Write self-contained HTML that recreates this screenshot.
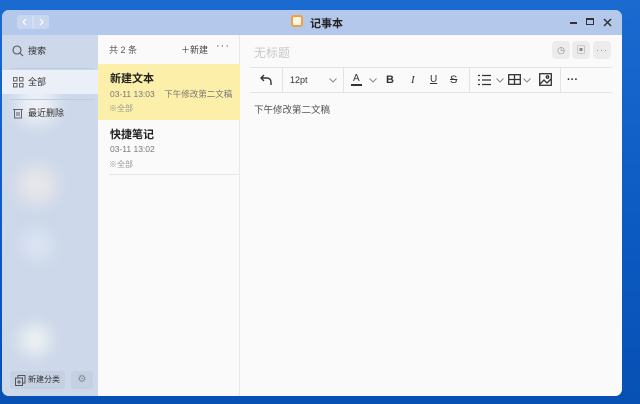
<!DOCTYPE html>
<html><head><meta charset="utf-8"><style>
*{margin:0;padding:0;box-sizing:border-box}
body{width:640px;height:404px;background:linear-gradient(180deg,#1a6ad0 0%,#0c5cc4 50%,#0750b4 100%);font-family:"Liberation Sans","Noto Sans CJK SC",sans-serif;position:relative;overflow:hidden}
.win{position:absolute;left:2px;top:10px;width:620px;height:386px;border-radius:7px;overflow:hidden;background:#fafafa}
.title{position:absolute;left:0;top:0;width:620px;height:25px;background:#b3c8ea}
.nav{position:absolute;left:15px;top:5px;width:32px;height:14px;background:#c8d7ef;border-radius:3px}
.side{position:absolute;left:0;top:25px;width:96px;height:361px;background:#cdd8ea}
.blob{position:absolute;border-radius:50%;filter:blur(8px)}
.si{position:absolute;left:0;width:96px;height:24px;font-size:9px;color:#333;line-height:24px;padding-left:26px}
.si svg{position:absolute;left:10px;top:6px}
.list{position:absolute;left:96px;top:25px;width:142px;height:361px;background:#fafafa;border-right:1px solid #e8e8e8}
.ed{position:absolute;left:238px;top:25px;width:382px;height:361px;background:#fafafa}
.tb{position:absolute;left:10px;top:32px;width:362px;height:26px;border-top:1px solid #e3e3e3;border-bottom:1px solid #e3e3e3}
.tb span{position:absolute;top:0;line-height:24px;font-size:12px;color:#333}
.tb svg{position:absolute}
.div{position:absolute;top:0;width:1px;height:24px;background:#e3e3e3}
.btn{position:absolute;top:6px;width:18px;height:18px;background:#ececec;border-radius:4px;color:#888;font-size:9px;text-align:center;line-height:18px}
</style></head><body>
<div class="win">
 <div class="title">
  <div class="nav"><svg width="32" height="14" style="position:absolute;left:0;top:0"><polyline points="9,4 6,7 9,10" fill="none" stroke="#fff" stroke-width="1.2"/><line x1="16" y1="1" x2="16" y2="13" stroke="#e0e8f6"/><polyline points="23,4 26,7 23,10" fill="none" stroke="#fff" stroke-width="1.2"/></svg></div>
  <div style="position:absolute;left:289px;top:5px;width:12px;height:12px;border:2px solid #f0a040;border-radius:3px;background:#fff6e8"></div>
  <div style="position:absolute;left:308px;top:5px;font-size:11px;font-weight:bold;color:#222">记事本</div>
  <div style="position:absolute;left:568px;top:12px;width:7px;height:2px;background:#333"></div>
  <div style="position:absolute;left:584px;top:8px;width:8px;height:7px;border:1.5px solid #333;border-top-width:2px"></div>
  <svg width="9" height="9" style="position:absolute;left:601px;top:8px"><path d="M1 1L8 8M8 1L1 8" stroke="#333" stroke-width="1.5"/></svg>
 </div>
 <div class="side">
  <div class="blob" style="left:15px;top:50px;width:40px;height:40px;background:#eef1f6"></div>
  <div class="blob" style="left:15px;top:130px;width:40px;height:40px;background:#e6e6ea"></div>
  <div class="blob" style="left:20px;top:195px;width:30px;height:30px;background:#dbe5f3"></div>
  <div class="blob" style="left:18px;top:290px;width:30px;height:30px;background:#eef3f3"></div>
  <div class="si" style="top:4px"><svg width="12" height="12"><circle cx="5" cy="5" r="4" fill="none" stroke="#555" stroke-width="1.1"/><line x1="8" y1="8" x2="11" y2="11" stroke="#555" stroke-width="1.1"/></svg>搜索</div>
  <div style="position:absolute;left:8px;top:33px;width:84px;height:1px;background:#bfcbe0"></div>
  <div class="si" style="top:35px;background:#eaeff8"><svg width="12" height="12"><g fill="none" stroke="#666"><rect x="1.5" y="1.5" width="3.5" height="3.5"/><rect x="7.5" y="1.5" width="3.5" height="3.5"/><rect x="1.5" y="7.5" width="3.5" height="3.5"/><rect x="7.5" y="7.5" width="3.5" height="3.5"/></g></svg>全部</div>
  <div style="position:absolute;left:8px;top:64px;width:84px;height:1px;background:#bfcbe0"></div>
  <div class="si" style="top:66px"><svg width="12" height="12"><g fill="none" stroke="#666"><line x1="1" y1="2.5" x2="11" y2="2.5"/><path d="M2.5 3v8h7v-8"/><line x1="5" y1="5" x2="5" y2="9"/><line x1="7" y1="5" x2="7" y2="9"/></g></svg>最近删除</div>
  <div style="position:absolute;left:8px;top:336px;width:55px;height:18px;background:#c5d0e3;border-radius:3px;font-size:8px;line-height:18px;padding-left:18px;color:#333"><svg width="11" height="11" style="position:absolute;left:5px;top:4px"><g fill="none" stroke="#555"><rect x="0.5" y="3" width="7" height="7.5"/><path d="M3 3V0.5h7v7.5H7.5"/><path d="M4 5v4M2 7h4"/></g></svg>新建分类</div>
  <div style="position:absolute;left:69px;top:336px;width:22px;height:18px;background:#c5d0e3;border-radius:3px;color:#888;font-size:10px;text-align:center;line-height:18px">⚙</div>
 </div>
 <div class="list">
  <div style="position:absolute;left:11px;top:8px;font-size:9px;color:#555">共 2 条</div>
  <div style="position:absolute;left:83px;top:8px;font-size:9px;color:#444">＋新建</div>
  <div style="position:absolute;left:118px;top:4px;font-size:11px;color:#555;letter-spacing:1px;line-height:14px">···</div>
  <div style="position:absolute;left:0;top:29px;width:142px;height:56px;background:#fcefa9">
   <div style="position:absolute;left:12px;top:6px;font-size:11px;font-weight:bold;color:#222">新建文本</div>
   <div style="position:absolute;left:12px;top:24px;font-size:8.5px;color:#777;white-space:nowrap">03-11 13:03&nbsp;&nbsp;&nbsp;&nbsp;下午修改第二文稿</div>
   <div style="position:absolute;left:11px;top:39px;font-size:8px;color:#999">※全部</div>
  </div>
  <div style="position:absolute;left:12px;top:91px;font-size:11px;font-weight:bold;color:#222">快捷笔记</div>
  <div style="position:absolute;left:12px;top:109px;font-size:8.5px;color:#777">03-11 13:02</div>
  <div style="position:absolute;left:11px;top:124px;font-size:8px;color:#999">※全部</div>
  <div style="position:absolute;left:11px;top:139px;width:131px;height:1px;background:#e6e6e6"></div>
 </div>
 <div class="ed">
  <div style="position:absolute;left:14px;top:9px;font-size:12px;color:#c8c8c8">无标题</div>
  <div class="btn" style="left:312px">◷</div>
  <div class="btn" style="left:332px">▣</div>
  <div class="btn" style="left:353px;letter-spacing:1px">···</div>
  <div class="tb">
   <svg width="14" height="14" style="left:9px;top:5px"><path d="M5 2L2 5l3 3M2 5h6a4 4 0 0 1 4 4v3" fill="none" stroke="#333" stroke-width="1.4"/></svg>
   <div class="div" style="left:32px"></div>
   <span style="left:40px;font-size:9px">12pt</span>
   <svg width="8" height="5" style="left:79px;top:10px"><polyline points="0.5,0.5 4,4 7.5,0.5" fill="none" stroke="#888"/></svg>
   <div class="div" style="left:93px"></div>
   <span style="left:103px;font-size:10px;line-height:22px">A</span><div style="position:absolute;left:101px;top:16px;width:11px;height:2px;background:#333"></div>
   <svg width="8" height="5" style="left:119px;top:10px"><polyline points="0.5,0.5 4,4 7.5,0.5" fill="none" stroke="#888"/></svg>
   <span style="left:136px;font-size:11px;font-weight:bold">B</span>
   <span style="left:161px;font-size:11px;font-style:italic;font-family:'Liberation Serif',serif">I</span>
   <span style="left:180px;font-size:10px;text-decoration:underline">U</span>
   <span style="left:200px;font-size:11px;text-decoration:line-through">S</span>
   <div class="div" style="left:219px"></div>
   <svg width="13" height="12" style="left:228px;top:6px"><g stroke="#333" stroke-width="1.3"><line x1="0" y1="1.5" x2="2" y2="1.5"/><line x1="4" y1="1.5" x2="13" y2="1.5"/><line x1="0" y1="6" x2="2" y2="6"/><line x1="4" y1="6" x2="13" y2="6"/><line x1="0" y1="10.5" x2="2" y2="10.5"/><line x1="4" y1="10.5" x2="13" y2="10.5"/></g></svg>
   <svg width="8" height="5" style="left:246px;top:10px"><polyline points="0.5,0.5 4,4 7.5,0.5" fill="none" stroke="#888"/></svg>
   <svg width="13" height="11" style="left:258px;top:6px"><g fill="none" stroke="#333" stroke-width="1.3"><rect x="0.7" y="0.7" width="11.6" height="9.6"/><line x1="0.7" y1="5.5" x2="12.3" y2="5.5"/><line x1="6.5" y1="0.7" x2="6.5" y2="10.3"/></g></svg>
   <svg width="8" height="5" style="left:273px;top:10px"><polyline points="0.5,0.5 4,4 7.5,0.5" fill="none" stroke="#888"/></svg>
   <svg width="13" height="13" style="left:289px;top:5px"><g fill="none" stroke="#333" stroke-width="1.3"><rect x="0.7" y="0.7" width="11.6" height="11.6"/><path d="M1 11l4-4 3 3 4-4"/><circle cx="8.5" cy="4" r="1.2"/></g></svg>
   <div class="div" style="left:310px"></div>
   <span style="left:317px;font-size:11px;font-weight:bold">···</span>
  </div>
  <div style="position:absolute;left:14px;top:67px;font-size:9.5px;color:#555">下午修改第二文稿</div>
 </div>
</div>
</body></html>
